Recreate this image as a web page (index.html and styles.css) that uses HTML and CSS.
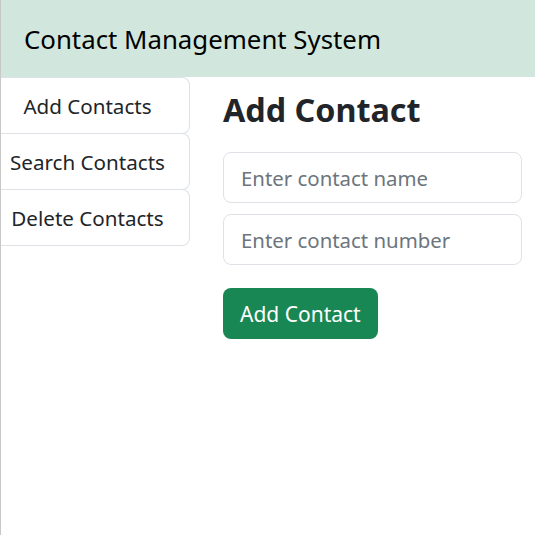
FILE: index.html
```html
<!DOCTYPE html>
<html>
<head>
<meta charset="utf-8">
<link rel="stylesheet" href="styles.css">
</head>
<body>
<div class="page">
  <header class="header">Contact Management System</header>
  <div class="layout">
    <nav class="sidebar">
      <div class="item">Add Contacts</div>
      <div class="item">Search Contacts</div>
      <div class="item">Delete Contacts</div>
    </nav>
    <main class="main">
      <h2 class="title">Add Contact</h2>
      <input class="field" type="text" placeholder="Enter contact name">
      <input class="field" type="text" placeholder="Enter contact number">
      <button class="btn">Add Contact</button>
    </main>
  </div>
</div>
</body>
</html>
```
FILE: styles.css
```css
html, body {
  margin: 0;
  padding: 0;
  background: #fff;
}
body {
  font-family: "Noto Sans", "Open Sans", sans-serif;
  color: #212529;
}
.page {
  border-left: 1px solid #c8c8c8;
  min-height: 535px;
  box-sizing: border-box;
}
.header {
  height: 77px;
  background: #d1e7dd;
  display: flex;
  align-items: center;
  padding-left: 23px;
  font-size: 25.8px;
  color: #000;
}
.layout {
  display: flex;
  gap: 33px;
}
.sidebar {
  width: 189px;
  display: flex;
  flex-direction: column;
}
.item {
  height: 57px;
  box-sizing: border-box;
  border: 1px solid #dee2e6;
  border-left: none;
  border-radius: 0 8px 8px 0;
  display: flex;
  align-items: center;
  justify-content: center;
  padding-right: 15px;
  font-size: 20.6px;
  margin-top: -1px;
}
.item:first-child {
  margin-top: 0;
}
.main {
  flex: 1;
  padding-top: 12px;
  padding-right: 13px;
  display: flex;
  flex-direction: column;
  align-items: flex-start;
}
.title {
  margin: 0 0 23px 0;
  font-size: 32.3px;
  font-weight: 700;
  line-height: 40px;
}
.field {
  width: 100%;
  box-sizing: border-box;
  height: 51px;
  border: 1px solid #dee2e6;
  border-radius: 8px;
  padding: 0 17px;
  font-family: inherit;
  font-size: 20.4px;
  color: #212529;
  margin-bottom: 11px;
  outline: none;
}
.field::placeholder {
  color: #6c757d;
}
.btn {
  margin-top: 12px;
  height: 51px;
  padding: 0 17px;
  background: #198754;
  color: #fff;
  border: none;
  border-radius: 8px;
  font-family: inherit;
  font-size: 21px;
}
```
